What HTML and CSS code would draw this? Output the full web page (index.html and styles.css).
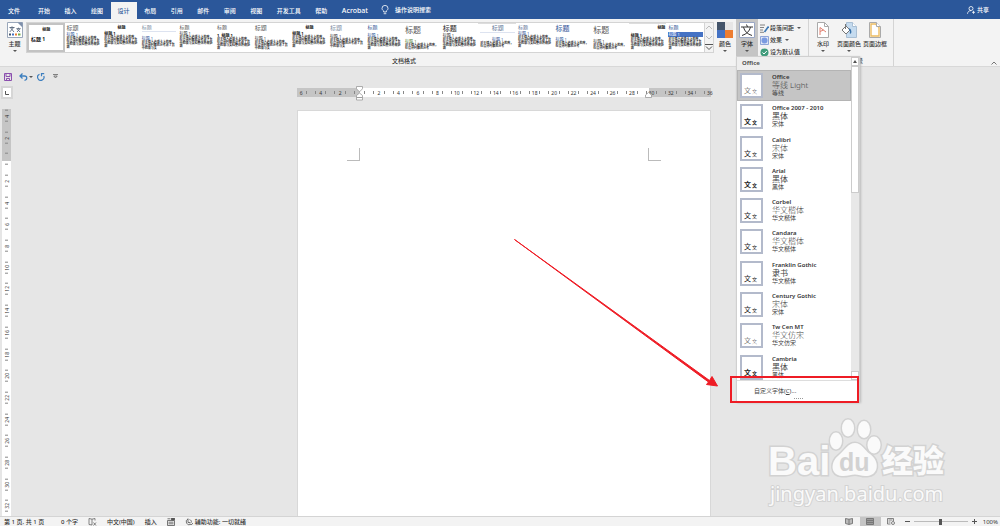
FILE: index.html
```html
<!DOCTYPE html>
<html lang="zh-CN">
<head>
<meta charset="utf-8">
<meta name="viewport" content="width=device-width, initial-scale=1">
<title>Word</title>
<link rel="stylesheet" href="styles.css">
</head>
<body>
<header class="tabbar">
  <button class="tab file">文件</button>
  <nav class="tabs">
    <button class="tab">开始</button><button class="tab">插入</button><button class="tab">绘图</button><button class="tab active">设计</button><button class="tab">布局</button><button class="tab">引用</button><button class="tab">邮件</button><button class="tab">审阅</button><button class="tab">视图</button><button class="tab">开发工具</button><button class="tab">帮助</button><button class="tab latin">Acrobat</button>
  </nav>
  <button class="tellme"><svg width="8" height="10" viewBox="0 0 8 10" fill="none" stroke="#fff" stroke-width=".8"><path d="M2.7 7V6C1.4 5 1 4.300 1 3.400a3 3 0 0 1 6 0C7 4.300 6.600 5 5.300 6v1zM2.700 8.700h2.600"/></svg>操作说明搜索</button>
  <button class="share"><svg width="8" height="8" viewBox="0 0 8 8" fill="none" stroke="#fff" stroke-width=".8"><circle cx="4" cy="2.500" r="2"/><path d="M.5 7.800C.8 5.500 2 4.700 4 4.600M5 6.300h3M6.500 4.800v3"/></svg>共享</button>
</header>

<section class="ribbon">
  <div class="group themes">
    <button class="big"><svg width="16" height="16" viewBox="0 0 16 16"><path d="M.5.5h15v15H.5z" fill="#fff" stroke="#9aa7ba"/><path d="M10.500.5h5v5z" fill="#7f90ab"/><g fill="none" stroke="#47586f" stroke-width=".8"><path d="M2.500 5.500h5M5 4.300v1.200M3.300 5.500l3.700 4.500M6.700 5.500L2.700 10M9.500 6.700h4M11.500 5.700v1M10 6.700l3 3.300M13 6.700L10 10"/></g><path d="M2 11.500h2v2H2z" fill="#44546a"/><path d="M5 11.500h2v2H5z" fill="#4472c4"/><path d="M8 11.500h2v2H8z" fill="#ed7d31"/><path d="M11 11.500h2.500v2H11z" fill="#70ad47"/></svg><span>主题</span><i class="caret"></i></button>
  </div>
  <div class="group formats">
    <div class="gallery">
      <div class="cards">
        <button class="card selected center"><b class="t4 strong">标题</b><em class="strong left gap4 h5">标题 1</em></button>
        <button class="card"><b class="t6">标题</b><em class="blue">标题 1</em><span>对于插入选项卡上的库，在设计时都充分考虑了其中的项与文档整体外观协调</span></button>
        <button class="card center"><b class="t4 strong">标题</b><em class="strong left">标题 1</em><span class="left">对于插入选项卡上的库，在设计时都充分考虑了其中的项与文档整体外观协调</span></button>
        <button class="card"><b class="t5 pale rule">标题</b><em class="blue gap4">标题 1</em><span>对于插入选项卡上的库，在设计时都充分考虑了其中的项与文</span></button>
        <button class="card"><b class="t5">标题</b><em>标题 1</em><span>对于插入选项卡上的库，在设计时都充分考虑了其中的项与文档整体外观协调</span></button>
        <button class="card"><b class="t5">标题</b><em class="strong gap2">1&nbsp; 标题 1</em><span>对于插入选项卡上的库，在设计时都充分考虑了其中的项与文档整体外观协调</span></button>
        <button class="card"><b class="t6">标题</b><em class="gap4">标题 1</em><span>对于插入选项卡上的库，在设计时都充分考虑了其中的项与文</span></button>
        <button class="card center"><b class="t4 strong">标题</b><em class="strong left">标题 1</em><span class="left">对于插入选项卡上的库，在设计时都充分考虑了其中的项与文档整体外观协调</span></button>
        <button class="card"><b class="t6 pale">标题</b><em class="gap2">标题 1</em><span>对于插入选项卡上的库，在设计时都充分考虑了其中的项与文</span></button>
        <button class="card"><b class="t5 blue">标题</b><em class="blue gap2">标题 1</em><span>对于插入选项卡上的库，在设计时都充分考虑了其中的项与文档整体外观协调</span></button>
        <button class="card"><b class="t8">标题</b><em class="green gap4">标题 1</em><span>对于插入选项卡上的库，在设计时都充分考</span></button>
        <button class="card"><b class="t7 dark">标题</b><em>标题 1</em><span>对于插入选项卡上的库，在设计时都充分考虑了其中的项与文档整体外观协调</span></button>
        <button class="card center topline"><b class="t6 slate rule">标题</b><em class="blue gap4">标题 1</em><span class="left">对于插入选项卡上的库，在设计时都充分考</span></button>
        <button class="card"><b class="t5 slate">标题</b><em class="blue">标题 1</em><span>对于插入选项卡上的库，在设计时都充分考虑了其中的项与文档整体外观协调</span></button>
        <button class="card"><b class="t7 blue">标题</b><em class="blue gap4">标题 1</em><span>对于插入选项卡上的库，在设计时都充分考</span></button>
        <button class="card"><b class="t8">标题</b><em class="gap4">标题 1</em><span>对于插入选项卡上的库，在设计时都充分考</span></button>
        <button class="card topline"><b class="t4 strong right">标题</b><em class="strong gap2">标题 1</em><span>对于插入选项卡上的库，在设计时都充分考虑了其中的项与文档整体外观协调</span></button>
        <button class="card"><b class="t5 blue">标题</b><em class="bar">标题 1</em><span>对于插入选项卡上的库，在设计时都充分考虑了其中的项与文档整体外观协调</span></button>
      </div>
      <div class="spin">
        <button aria-label="向上"><svg width="8" height="5" viewBox="0 0 8 5" fill="none" stroke="#bbb"><path d="M1 4l3-3 3 3"/></svg></button>
        <button aria-label="向下"><svg width="8" height="5" viewBox="0 0 8 5" fill="none" stroke="#bbb"><path d="M1 1l3 3 3-3"/></svg></button>
        <button aria-label="其他"><svg width="8" height="8" viewBox="0 0 8 8" fill="none" stroke="#555"><path d="M0 1.500h8M1 3.500l3 3 3-3"/></svg></button>
      </div>
    </div>
    <div class="caption">文档格式</div>
  </div>
  <div class="group row">
    <button class="big"><svg width="16" height="16" viewBox="0 0 16 16"><path d="M0 0h8v8H0z" fill="#44546a"/><path d="M8 0h8v8H8z" fill="#e7e6e6"/><path d="M0 8h8v8H0z" fill="#4472c4"/><path d="M8 8h8v8H8z" fill="#ed7d31"/></svg><span>颜色</span><i class="caret"></i></button>
    <div class="fonts">
      <button class="big pressed" aria-expanded="true"><svg width="16" height="16" viewBox="0 0 16 16"><path d="M.5.5h15v15H.5z" fill="#fff" stroke="#9aa7c4"/><path d="M2 5h12M7.500 2.500l1 2.500M4.500 5.200c1 4 4 7 8.500 8.300M11.500 5.200c-1 4-4 7-8.500 8.300" fill="none" stroke="#333"/></svg><span>字体</span><i class="caret"></i></button>
      <div class="menu">
        <div class="menu-body">
          <div class="menu-main">
            <h2>Office</h2>
            <div class="viewport">
              <div class="list">
                <button class="font on"><span class="thumb light">文<small>文</small></span><span class="txt"><b>Office</b><strong class="thin">等线 Light</strong><span>等线</span></span></button>
                <button class="font"><span class="thumb heavy">文<small>文</small></span><span class="txt"><b>Office 2007 - 2010</b><strong>黑体</strong><span>宋体</span></span></button>
                <button class="font"><span class="thumb">文<small>文</small></span><span class="txt"><b>Calibri</b><strong class="thin">宋体</strong><span>宋体</span></span></button>
                <button class="font"><span class="thumb heavy">文<small>文</small></span><span class="txt"><b>Arial</b><strong>黑体</strong><span>黑体</span></span></button>
                <button class="font"><span class="thumb kai">文<small>文</small></span><span class="txt"><b>Corbel</b><strong class="kai">华文楷体</strong><span class="kai">华文楷体</span></span></button>
                <button class="font"><span class="thumb kai">文<small>文</small></span><span class="txt"><b>Candara</b><strong class="kai">华文楷体</strong><span class="kai">华文楷体</span></span></button>
                <button class="font"><span class="thumb kai">文<small>文</small></span><span class="txt"><b>Franklin Gothic</b><strong>隶书</strong><span class="kai">华文楷体</span></span></button>
                <button class="font"><span class="thumb">文<small>文</small></span><span class="txt"><b>Century Gothic</b><strong class="thin">宋体</strong><span>宋体</span></span></button>
                <button class="font"><span class="thumb light">文<small>文</small></span><span class="txt"><b>Tw Cen MT</b><strong class="kai">华文仿宋</strong><span class="kai">华文仿宋</span></span></button>
                <button class="font"><span class="thumb heavy">文<small>文</small></span><span class="txt"><b>Cambria</b><strong>黑体</strong><span>黑体</span></span></button>
              </div>
            </div>
          </div>
          <div class="scroll"><i class="cap"><svg width="4" height="3" viewBox="0 0 4 3"><path d="M2 0l2 3H0z" fill="#555"/></svg></i><i class="grip"></i><i class="fill"></i><i class="cap"></i></div>
        </div>
        <button class="custom">自定义字体(<u>C</u>)...</button>
        <i class="dots"></i>
        <i class="marker"></i>
      </div>
    </div>
    <div class="small">
      <button><svg width="9" height="9" viewBox="0 0 9 9" fill="none" stroke="#666" stroke-width=".8"><path d="M0 1h5M0 3.500h4M0 6h3M0 8.300h4"/><path d="M8.500 2.500L4.500 8" stroke="#3c78b4" stroke-width="1.600"/></svg>段落间距<i class="caret"></i></button>
      <button><svg width="9" height="9" viewBox="0 0 9 9"><path d="M.5.5h8v8h-8z" fill="#dfe6f6" stroke="#8fa5d8"/><circle cx="4.500" cy="4.500" r="3" fill="#7a9ae0"/></svg>效果<i class="caret"></i></button>
      <button><svg width="9" height="9" viewBox="0 0 9 9"><circle cx="4.500" cy="4.500" r="4" fill="#3f9b7b"/><path d="M2.500 4.500L4 6l2.800-3" fill="none" stroke="#fff"/></svg>设为默认值</button>
    </div>
  </div>
  <div class="group page-bg">
    <div class="row tools">
      <button class="big"><svg width="16" height="16" viewBox="0 0 16 16"><path d="M2.500.5h7l4 4v11h-11z" fill="#fff" stroke="#aaa"/><path d="M9.500.5v4h4" fill="none" stroke="#aaa"/><path d="M5 13V5.500l6 4.500M5 9.500l3.500-1.500" fill="none" stroke="#e08070"/></svg><span>水印</span><i class="caret"></i></button>
      <button class="big"><svg width="16" height="16" viewBox="0 0 16 16"><path d="M5.500.5h6l4 4v11h-10z" fill="#c5dbef" stroke="#a9bfd4"/><path d="M11.500.5v4h4" fill="#fff" stroke="#a9bfd4"/><path d="M1 8l4-4 4 4-4 4z" fill="#fff" stroke="#777"/><path d="M4.500 7V2" stroke="#777"/><path d="M8 7c2 1 2 3 1.200 4.500" fill="none" stroke="#356fa8" stroke-width="1.400"/></svg><span>页面颜色</span><i class="caret"></i></button>
      <button class="big"><svg width="16" height="16" viewBox="0 0 16 16"><path d="M2.500.5h7l4 4v11h-11z" fill="#fff" stroke="#aaa"/><path d="M4 2h4.500l3.500 3.500V14H4z" fill="none" stroke="#edbd62" stroke-width="1.400"/><path d="M9.500.5v4h4" fill="#fff" stroke="#aaa"/></svg><span>页面边框</span></button>
    </div>
    <div class="caption">页面背景</div>
  </div>
  <div class="rest"><button aria-label="折叠功能区"><svg width="6" height="4" viewBox="0 0 6 4" fill="none" stroke="#555" stroke-width=".8"><path d="M.5 3.500L3 1l2.500 2.500"/></svg></button></div>
</section>

<div class="qat">
  <button aria-label="保存"><svg width="8" height="8" viewBox="0 0 8 8" fill="none" stroke="#8b4fae"><path d="M.5.5h7v7h-7zM2 .5v3h4v-3M2.500 7.500v-2h3v2"/></svg></button>
  <button aria-label="撤消"><svg width="9" height="8" viewBox="0 0 9 8" fill="none" stroke="#3d7fbf" stroke-width="1.300"><path d="M3.500.5L1 3l2.500 2.500M1 3h4.500c3 0 3 4 0 4.300"/></svg><i class="caret"></i></button>
  <button aria-label="恢复"><svg width="8" height="8" viewBox="0 0 8 8" fill="none" stroke="#3d7fbf" stroke-width="1.200"><path d="M2.500 1.200A3.200 3.200 0 1 0 6.800 3M4.500 3.300V.6h2.700"/></svg></button>
  <button aria-label="自定义"><svg width="5" height="5" viewBox="0 0 5 5" fill="none" stroke="#666" stroke-width=".8"><path d="M0 .5h5M.8 2h3.400L2.500 4z"/></svg></button>
</div>

<main class="work">
  <aside class="side">
    <button class="tabstop" aria-label="制表符"><svg width="4" height="4" viewBox="0 0 4 4" fill="none" stroke="#555"><path d="M.5 0v3.500H4"/></svg></button>
    <div class="vruler"><div class="vscale"><span>4</span><span>2</span><span></span><span>2</span><span>4</span><span>6</span><span>8</span><span>10</span><span>12</span><span>14</span><span>16</span><span>18</span><span>20</span><span>22</span><span>24</span><span>26</span><span>28</span><span>30</span><span>32</span></div></div>
  </aside>
  <div class="canvas">
    <div class="hruler">
      <div class="hscale"><span>6</span><span>4</span><span>2</span><span></span><span>2</span><span>4</span><span>6</span><span>8</span><span>10</span><span>12</span><span>14</span><span>16</span><span>18</span><span>20</span><span>22</span><span>24</span><span>26</span><span>28</span><span>30</span><span>32</span><span>34</span><span>36</span></div>
      <svg class="indent first" width="7" height="15" viewBox="0 0 7 15" fill="#fff" stroke="#999" stroke-width=".8"><path d="M.5.5h6v2.300l-3 3-3-3zM3.500 7l3 2.500v2h-6v-2zM.5 11.500h6V14h-6z"/></svg>
      <svg class="indent last" width="7" height="6" viewBox="0 0 7 6" fill="#fff" stroke="#999" stroke-width=".8"><path d="M3.500.5l3 2.500v2.500h-6V3z"/></svg>
    </div>
    <article class="page"><i class="crop l"></i><i class="crop r"></i></article>
  </div>
</main>

<footer class="status">
  <span class="pages">第 1 页, 共 1 页</span>
  <span>0 个字</span>
  <svg width="9" height="8" viewBox="0 0 9 8" fill="none" stroke="#666" stroke-width=".8"><path d="M4 7L1 6.500v-6l3 .7L7 .5v2M4 1.200V7M5.500 4.500l2.500 3M8 4.500l-2.500 3"/></svg>
  <span>中文(中国)</span>
  <span>插入</span>
  <svg width="8" height="8" viewBox="0 0 8 8" fill="none" stroke="#555" stroke-width=".8"><path d="M.5 2.500h7v5h-7zM.5.8h3M1.500 4.200h5M1.500 5.800h5"/><path d="M4.500 0h3v2h-3z" fill="#555"/></svg>
  <button class="access"><svg width="8" height="8" viewBox="0 0 8 8" fill="none" stroke="#555" stroke-width=".8"><path d="M3 1A3 3 0 1 0 5.500 6.500M3 .5v4h2.500M4.500 1.500c1.500.5 2 1.500 2 3M5 5.500l1.200 1.500L8 5"/></svg>辅助功能: 一切就绪</button>
  <div class="views">
    <button aria-label="阅读视图"><svg width="8" height="7" viewBox="0 0 8 7" fill="#bbb" stroke="#666" stroke-width=".8"><path d="M4 1.200L.5.500v5L4 6.500l3.500-1v-5zM4 1.200v5"/></svg></button>
    <button class="current" aria-label="页面视图"><svg width="8" height="7" viewBox="0 0 8 7" fill="#999" stroke="#777"><path d="M.5.5h7v6h-7zM1 2.500h6M1 4.500h6"/></svg></button>
    <button aria-label="Web 版式"><svg width="8" height="7" viewBox="0 0 8 7" fill="none" stroke="#666" stroke-width=".8"><path d="M3.500 6H.5V.5h6V3M1.500 2h4M1.500 4h2"/><circle cx="6" cy="5" r="1.500"/></svg></button>
  </div>
  <div class="zoom"><button aria-label="缩小"><svg width="5" height="5" viewBox="0 0 5 5" stroke="#555"><path d="M0 2.500h5"/></svg></button><input type="range" min="0" max="100" value="50" aria-label="缩放"><button aria-label="放大"><svg width="5" height="5" viewBox="0 0 5 5" stroke="#555"><path d="M0 2.500h5M2.500 0v5"/></svg></button><button class="latin">100%</button></div>
</footer>

<svg class="arrow" width="206" height="150" viewBox="0 0 206 150"><path d="M.5.500L195.500 141.500l2.500-4 5.500 9.500-11-1.500 2-2.500z" fill="#ee1c25" stroke="#ee1c25"/></svg>

<svg class="logo" width="184" height="92" viewBox="0 0 184 92">
  <g class="mark">
    <text class="brand" x="4" y="59">Bai</text>
    <ellipse cx="72" cy="25" rx="6" ry="8.500"/><ellipse cx="84" cy="12" rx="6" ry="8.500"/><ellipse cx="100" cy="13.500" rx="6" ry="8.500"/><ellipse cx="110" cy="29" rx="6.500" ry="8.500"/>
    <path d="M91 27c7 0 9 7 15 11 10 7 9 21-3 22-5 .6-8-1.500-12-1.500S83 60.500 78 60c-12-1-12-14-3-21 6-5 9-12 16-12z"/>
    <text class="cn" x="118" y="56">经验</text>
    <text class="site" x="6" y="85">jingyan.baidu.com</text>
  </g>
  <text class="du" x="75" y="55">du</text>
</svg>
</body>
</html>
```
FILE: styles.css
```css
* { box-sizing: border-box; }
body {
  margin: 0;
  height: 100vh;
  display: flex;
  flex-direction: column;
  position: relative;
  overflow: hidden;
  background: #e6e6e6;
  color: #333;
  font: 6px/8px "Noto Sans", "Noto Sans CJK SC", sans-serif;
}
button {
  margin: 0;
  padding: 0;
  border: 0;
  background: none;
  color: inherit;
  font: inherit;
  display: flex;
  align-items: center;
}
svg { display: block; flex: none; }
i, em { font-style: normal; }
.row { display: flex; }
.caret {
  border: 2px solid transparent;
  border-top-color: #555;
  border-bottom: 0;
  width: 3px;
}
.latin { font-size: 7px; }

/* Tabs */
.tabbar {
  display: flex;
  height: 19px;
  background: #2b579a;
  color: #fff;
  font-weight: 500;
}
.tabs { display: flex; width: 344px; justify-content: space-between; }
.tab { padding: 0 7px; margin-top: 2px; }
.tab.file { padding: 0 11px 0 8px; }
.tab.active { background: #f3f3f3; color: #2b579a; }
.tellme { gap: 6px; padding-left: 6px; }
.share { gap: 2px; margin-left: auto; padding-right: 11px; }

/* Ribbon */
.ribbon {
  display: flex;
  height: 48px;
  background: #f3f3f3;
  border-bottom: 1px solid #d8d8d8;
}
.group { display: flex; }
.big {
  flex-direction: column;
  padding-top: 3px;
  width: 22px;
  height: 37px;
  gap: 2px;
}
.big span { white-space: nowrap; font-weight: 500; }
.themes { width: 26px; justify-content: center; padding-left: 3px; }
.formats { flex: 1; flex-direction: column; min-width: 0; }
.caption { text-align: center; margin-top: auto; height: 9px; font-weight: 500; }
.formats .caption { padding-left: 68px; }
.gallery {
  display: flex;
  height: 31px;
  margin-top: 3px;
  background: #fff;
  border: 1px solid #d4d4d4;
}
.cards { flex: 1; min-width: 0; display: grid; grid-template-columns: repeat(18, minmax(0, 1fr)); }
.card {
  flex-direction: column;
  align-items: stretch;
  text-align: left;
  padding: 1px 1px 0 2px;
  height: 29px;
}
.card b { font-weight: 400; color: #555; }
.card em { font-size: 4px; line-height: 5px; color: #333; }
.card span { font-size: 3px; line-height: 3px; font-weight: 700; color: #222; }
.card.center { text-align: center; }
.card.topline { box-shadow: inset 0 1px #ddd; }
.card.selected { border: 2px solid #c3c3c3; }
.card .left { text-align: left; }
.card .right { text-align: right; }
.card .strong { font-weight: 700; color: #111; }
.card .blue { color: #2f5496; }
.card .slate { color: #5d7294; }
.card .pale { color: #7a8aa0; }
.card .green { color: #538135; }
.card .dark { color: #222; }
.card .gap2 { margin-top: 2px; }
.card .gap4 { margin-top: 4px; }
.card .h5 { font-size: 5px; }
.card .bar { background: #4472c4; color: #fff; margin: 1px 0; }
.card .rule { border-bottom: 1px solid #dde3f0; }
.card .t4 { font-size: 4px; line-height: 7px; }
.card .t5 { font-size: 5px; line-height: 7px; }
.card .t6 { font-size: 6px; line-height: 8px; }
.card .t7 { font-size: 7px; line-height: 9px; }
.card .t8 { font-size: 8px; line-height: 11px; }
.spin { width: 9px; display: grid; grid-template-rows: repeat(3, 1fr); background: #f3f3f3; }
.spin button { justify-content: center; border-left: 1px solid #d4d4d4; }
.fonts { position: relative; }
.pressed { background: #c5c5c5; }
.small { padding: 3px 0 0 2px; width: 50px; display: grid; grid-template-rows: repeat(3, 12px); height: 39px; }
.small button { gap: 1px; white-space: nowrap; font-weight: 500; }
.small .caret { margin-left: 2px; }
.page-bg {
  width: 86px;
  flex-direction: column;
  border: 1px solid #d4d4d4;
  border-width: 0 1px;
}
.tools { justify-content: center; gap: 4px; padding-right: 4px; }
.rest { width: 106px; display: flex; justify-content: flex-end; align-items: flex-end; padding: 0 3px 1px 0; }

/* Font menu */
.menu {
  position: absolute;
  z-index: 3;
  top: 37px;
  left: 0;
  width: 124px;
  background: #fff;
  border: 1px solid #d0d0d0;
  box-shadow: 1px 1px 2px #bbb;
}
.menu-body { display: flex; border-bottom: 1px solid #ddd; }
.menu-main { flex: 1; min-width: 0; }
.menu h2 {
  margin: 0;
  padding-left: 5px;
  background: #eee;
  color: #555;
  font-size: 6px;
  line-height: 13px;
}
.viewport { height: 310px; overflow: hidden; }
.list { height: 313px; display: grid; grid-template-rows: repeat(10, 1fr); }
.font { gap: 9px; padding: 3px 0 0 3px; text-align: left; align-items: flex-start; width: 100%; }
.font.on { background: #c5c5c5; box-shadow: inset 0 0 0 1px #b4b4b4; }
.thumb {
  width: 23px;
  height: 25px;
  border: 2px solid #b3bacb;
  background: #fff;
  display: flex;
  align-items: flex-end;
  gap: 1px;
  padding: 0 2px 1px;
  font-size: 7px;
  line-height: 9px;
  color: #222;
}
.thumb small { font-size: 5px; line-height: 8px; }
.thumb.heavy { font-weight: 700; }
.thumb.light { font-weight: 300; }
.txt { display: flex; flex-direction: column; white-space: nowrap; color: #444; }
.txt b { font-weight: 600; color: #333; }
.txt strong { font-size: 8px; font-weight: 400; }
.txt .thin { font-weight: 300; }
.kai { font-family: "KaiTi", "Noto Sans", "Noto Sans CJK SC", serif; }
.txt strong.kai { font-weight: 300; }
.scroll { width: 8px; display: flex; flex-direction: column; background: #e8e8e8; }
.cap { height: 9px; border: 1px solid #ccc; background: #fff; display: flex; align-items: center; justify-content: center; }
.grip { height: 127px; background: #fff; border: 1px solid #ccc; }
.fill { flex: 1; }
.custom { padding: 5px 0 2px 17px; height: 17px; width: 100%; color: #444; }
.dots { display: block; width: 9px; margin: 0 auto 2px; border-top: 1px dotted #999; }
.marker {
  position: absolute;
  left: -7px;
  right: 0;
  bottom: -2px;
  height: 27px;
  border: 2px solid #ee1c25;
}

/* Quick access */
.qat { display: flex; align-items: center; height: 19px; padding-left: 4px; gap: 7px; }
.qat button { gap: 1px; }
.qat button:last-child { margin-left: 1px; }
.qat button:nth-child(3) { margin-left: -3px; }

/* Workspace */
.work { flex: 1; min-height: 0; display: flex; }
.side { width: 13px; display: flex; flex-direction: column; }
.tabstop { width: 12px; height: 13px; margin-left: 1px; background: #fff; border: 2px solid #d6d6d6; justify-content: center; }
.vruler {
  flex: 1;
  min-height: 0;
  margin: 10px 0 0 2px;
  width: 9px;
  overflow: hidden;
  background: linear-gradient(#c5c5c5 52px, #fff 52px);
}
.vscale { display: grid; grid-template-rows: repeat(19, 1fr); height: 412px; margin-top: -4px; }
.vscale span, .hscale span { display: flex; align-items: center; justify-content: space-between; line-height: 6px; font-size: 5px; }
.vscale span { writing-mode: vertical-rl; transform: rotate(180deg); padding: 5px 0; }
.vscale span::before, .vscale span::after { content: ""; width: 3px; height: 1px; background: #888; }
.canvas { flex: 1; display: flex; flex-direction: column; align-items: center; padding: 2px 6px 0 0; }
.hruler { position: relative; width: 414px; background: linear-gradient(90deg, #c5c5c5 63px, #fff 63px, #fff 352px, #c5c5c5 352px); }
.hscale { display: grid; grid-template-columns: repeat(22, 1fr); width: 428px; margin-left: -5px; }
.hscale span { height: 9px; padding: 0 4px; }
.hscale span::before, .hscale span::after { content: ""; width: 1px; height: 3px; background: #888; }
.hscale span:first-child::before, .hscale span:last-child::after { background: none; }
.indent { position: absolute; }
.first { left: 59px; top: -2px; }
.last { left: 348px; top: 4px; }
.page { flex: 1; margin-top: 13px; width: 414px; background: #fff; border: 1px solid #d8d8d8; border-bottom: 0; display: flex; justify-content: space-between; padding: 37px 49px 0; }
.crop { width: 13px; height: 13px; border: 1px solid #bbb; border-width: 0 1px 1px 0; }
.crop.r { border-width: 0 0 1px 1px; }

/* Status bar */
.status {
  display: flex;
  align-items: center;
  height: 10px;
  gap: 10px;
  padding: 0 2px 0 4px;
  background: #f3f3f3;
  border-top: 1px solid #d4d4d4;
  white-space: nowrap;
  font-weight: 500;
}
.pages { min-width: 47px; }
.access { gap: 2px; }
.views { display: flex; margin-left: auto; }
.views button { width: 21px; height: 9px; justify-content: center; }
.views .current { background: #c5c5c5; }
.zoom { display: flex; align-items: center; gap: 4px; margin-left: -7px; }
.zoom .latin { margin-left: 2px; font-weight: 400; font-size: 6px; }
.zoom input { appearance: none; width: 54px; height: 7px; margin: 0; background: linear-gradient(#bbb, #bbb) center / 100% 1px no-repeat; }
.zoom input::-webkit-slider-thumb { appearance: none; width: 3px; height: 6px; background: #555; }

/* Overlays */
.arrow { position: absolute; left: 514px; top: 239px; }
.logo { position: absolute; right: 52px; bottom: 18px; }
.mark { fill: #fafafa; stroke: #d2d2d2; stroke-width: 3px; paint-order: stroke; }
.brand { font: 700 40px "Liberation Sans", sans-serif; }
.cn { font: 900 31px "Noto Sans CJK SC", sans-serif; }
.site { font: 400 20px "Noto Sans", sans-serif; stroke-width: 2px; }
.du { font: 700 25px "Liberation Sans", sans-serif; fill: #d2d2d2; }
```
